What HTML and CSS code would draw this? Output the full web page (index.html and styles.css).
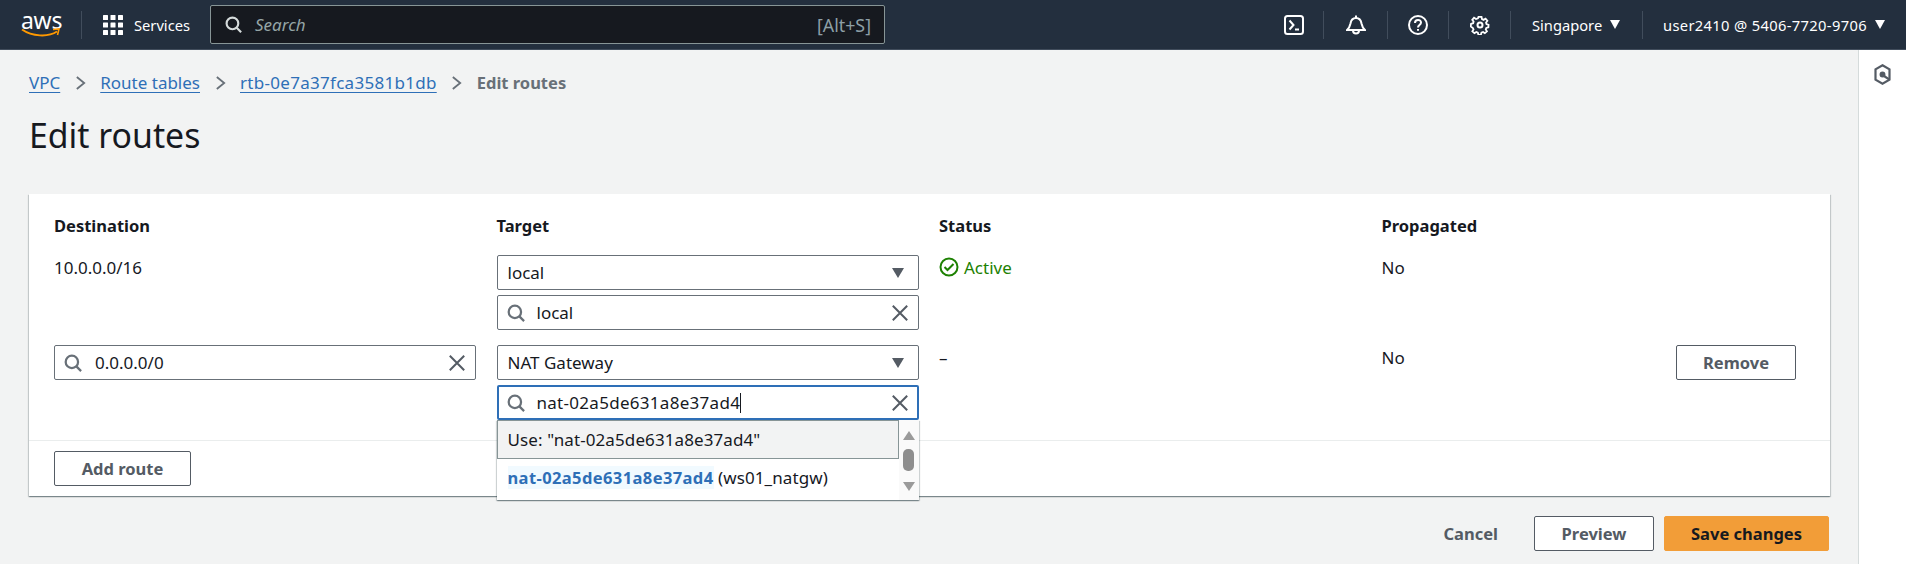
FILE: index.html
```html
<!DOCTYPE html>
<html lang="en">
<head>
    <meta charset="UTF-8">
    <meta name="viewport" content="width=device-width, initial-scale=1.0">
    <title>Edit routes</title>
    <link rel="stylesheet" href="styles.css">
</head>
<body>
    <svg class="icon-defs" width="0" height="0">
        <symbol id="i-search" viewBox="0 0 16 16"><circle cx="7" cy="7" r="5.5" fill="none" stroke="currentColor" stroke-width="2"/><path d="M11 11l4.2 4.2" fill="none" stroke="currentColor" stroke-width="2"/></symbol>
        <symbol id="i-close" viewBox="0 0 16 16"><path d="M.8.8l14.400 14.400M15.200.8L.8 15.200" fill="none" stroke="currentColor" stroke-width="2"/></symbol>
    </svg>

    <header class="topnav">
        <div class="logo">
            <span class="logo-text">aws</span>
            <svg class="logo-smile" viewBox="0 0 40 10"><path d="M1 1.5c10 7 26 8 35 2" fill="none" stroke="#f90" stroke-width="2"/><path d="M32 1.5l6-.5-1.5 6" fill="none" stroke="#f90" stroke-width="1.6"/></svg>
        </div>
        <div class="services">
            <svg class="services-icon" viewBox="0 0 20 20" fill="#fff">
                <rect width="5" height="5" rx=".5"/><rect x="7.5" width="5" height="5" rx=".5"/><rect x="15" width="5" height="5" rx=".5"/>
                <rect y="7.5" width="5" height="5" rx=".5"/><rect x="7.5" y="7.5" width="5" height="5" rx=".5"/><rect x="15" y="7.5" width="5" height="5" rx=".5"/>
                <rect y="15" width="5" height="5" rx=".5"/><rect x="7.5" y="15" width="5" height="5" rx=".5"/><rect x="15" y="15" width="5" height="5" rx=".5"/>
            </svg>
            <span>Services</span>
        </div>
        <div class="nav-search">
            <svg class="nav-search-icon"><use href="#i-search"/></svg>
            <span class="nav-search-hint">Search</span>
            <span class="nav-search-key">[Alt+S]</span>
        </div>
        <div class="nav-right">
            <div class="nav-item nav-icon nav-terminal">
                <svg viewBox="0 0 20 20" width="20" height="20" fill="none" stroke="#fff" stroke-width="2"><rect x="1" y="1" width="18" height="18" rx="2.5"/><path d="M5.5 5.5l4 4.5-4 4.5M11 14.5h4"/></svg>
            </div>
            <div class="nav-item nav-icon nav-bell">
                <svg viewBox="0 0 20 20" width="20" height="20" fill="none" stroke="#fff" stroke-width="2"><path d="M10 .5v2.500M1 15h18c-2.500-2-3-4-3.500-6.500C15 5.500 13 3 10 3S5 5.500 4.500 8.500C4 11 3.500 13 1 15z"/><path d="M7 15.500a3 3 0 0 0 6 0"/></svg>
            </div>
            <div class="nav-item nav-icon nav-help">
                <svg viewBox="0 0 20 20" width="20" height="20" fill="none" stroke="#fff" stroke-width="2"><circle cx="10" cy="10" r="9"/><path d="M7 8c0-4 6-4 6-.5 0 2.500-3 2.500-3 5"/><path d="M10 14v1.800"/></svg>
            </div>
            <div class="nav-item nav-icon">
                <svg viewBox="0 0 20 20" width="20" height="20" fill="none" stroke="#fff" stroke-width="2"><circle cx="10" cy="10" r="2.500"/><path d="M8.300 1h3.400l.5 2.500 1.800.8 2.200-1.400 2 2.400-1.500 2.100.5 1.600 2.300.8v0l-.2 2.800-2.300.7-.6 1.700 1.300 2.100-2.300 2-2-1.400-1.800.7-.6 2.500H8.200l-.6-2.500-1.700-.7-2.100 1.400-2.300-2 1.300-2.100-.7-1.700L-.2 11.600 0 8.800l2.400-.8.500-1.600L1.400 4.300l2-2.400 2.200 1.400 2.100-.8z" transform="translate(1 1) scale(.9)"/></svg>
            </div>
            <div class="nav-item nav-menu nav-region">Singapore <span class="nav-caret"></span></div>
            <div class="nav-item nav-menu nav-user">user2410 @ 5406-7720-9706 <span class="nav-caret"></span></div>
        </div>
    </header>

    <div class="layout">
        <main class="content">
            <nav class="breadcrumbs">
                <a href="#">VPC</a>
                <svg class="crumb-sep" viewBox="0 0 12 16"><path d="M2 1.500l8 6.500-8 6.500" fill="none" stroke="currentColor" stroke-width="2"/></svg>
                <a href="#">Route tables</a>
                <svg class="crumb-sep" viewBox="0 0 12 16"><path d="M2 1.500l8 6.500-8 6.500" fill="none" stroke="currentColor" stroke-width="2"/></svg>
                <a href="#" class="resource-id">rtb-0e7a37fca3581b1db</a>
                <svg class="crumb-sep" viewBox="0 0 12 16"><path d="M2 1.500l8 6.500-8 6.500" fill="none" stroke="currentColor" stroke-width="2"/></svg>
                <span class="crumb-current">Edit routes</span>
            </nav>

            <h1 class="page-title">Edit routes</h1>

            <section class="card">
                <div class="routes">
                    <div class="col-head">Destination</div>
                    <div class="col-head">Target</div>
                    <div class="col-head">Status</div>
                    <div class="col-head">Propagated</div>

                    <div class="cell-text">10.0.0.0/16</div>
                    <div class="target">
                        <div class="field select">local<span class="select-caret"></span></div>
                        <div class="field search">
                            <svg class="field-search"><use href="#i-search"/></svg>
                            <span class="field-value">local</span>
                            <svg class="field-clear"><use href="#i-close"/></svg>
                        </div>
                    </div>
                    <div class="cell-text status-ok">
                        <svg viewBox="0 0 20 20" width="20" height="20" fill="none" stroke="#1d8102" stroke-width="2"><circle cx="10" cy="10" r="8.500"/><path d="M5.500 10l3 3 6-6"/></svg>
                        Active
                    </div>
                    <div class="cell-text">No</div>

                    <div class="field search">
                        <svg class="field-search"><use href="#i-search"/></svg>
                        <span class="field-value dest-value">0.0.0.0/0</span>
                        <svg class="field-clear"><use href="#i-close"/></svg>
                    </div>
                    <div class="target">
                        <div class="field select">NAT Gateway<span class="select-caret"></span></div>
                        <div class="search-wrap">
                            <div class="field search focused">
                                <svg class="field-search"><use href="#i-search"/></svg>
                                <span class="field-value resource-id">nat-02a5de631a8e37ad4<span class="text-cursor"></span></span>
                                <svg class="field-clear"><use href="#i-close"/></svg>
                            </div>
                            <div class="dropdown">
                                <div class="dropdown-list">
                                    <div class="option option-use">Use: "nat-02a5de631a8e37ad4"</div>
                                    <div class="option"><mark class="match">nat-02a5de631a8e37ad4</mark> (ws01_natgw)</div>
                                </div>
                                <div class="scrollbar">
                                    <span class="arrow-up"></span>
                                    <span class="thumb"></span>
                                    <span class="arrow-down"></span>
                                </div>
                            </div>
                        </div>
                    </div>
                    <div class="cell-text">–</div>
                    <div class="cell-text cell-last">
                        <span>No</span>
                        <button class="btn btn-remove">Remove</button>
                    </div>
                </div>
                <div class="card-footer">
                    <button class="btn btn-add">Add route</button>
                </div>
            </section>

            <div class="actions">
                <button class="btn-link">Cancel</button>
                <button class="btn btn-preview">Preview</button>
                <button class="btn btn-save">Save changes</button>
            </div>
        </main>

        <aside class="side">
            <svg viewBox="0 0 17 21" width="17" height="21" fill="none" stroke="#545b64" stroke-width="2.200"><path d="M8.500 1.300l7 4v10.400l-7 4-7-4V5.300z"/><circle cx="8.500" cy="10.500" r="2.200" fill="#545b64" stroke-width="1.500"/><path d="M10 12l5.500 3.700"/></svg>
        </aside>
    </div>
</body>
</html>
```

FILE: styles.css
```css
* {
    box-sizing: border-box;
}
html, body {
    height: 100%;
}
body {
    margin: 0;
    overflow: hidden;
    display: flex;
    flex-direction: column;
    font-family: "Noto Sans", sans-serif;
    font-size: 17px;
    line-height: 22px;
    color: #16191f;
    background-color: #f2f3f3;
}
button {
    font-family: inherit;
    font-size: 16.500px;
    cursor: pointer;
}
.icon-defs {
    position: absolute;
}

/* top bar */
.topnav {
    display: flex;
    align-items: center;
    height: 50px;
    flex-shrink: 0;
    font-size: 14.700px;
    background-color: #232f3e;
    border-bottom: 1px solid #414d5c;
    color: #fff;
}
.logo {
    width: 82px;
    height: 28px;
    padding-left: 21px;
    border-right: 1px solid #414d5c;
    display: flex;
    flex-direction: column;
}
.logo-text {
    font-size: 23px;
    line-height: 18px;
    letter-spacing: -.3px;
}
.logo-smile {
    width: 40px;
    height: 10px;
    margin-top: -1px;
}
.services {
    display: flex;
    align-items: center;
    gap: 11px;
    width: 128px;
    padding-left: 21px;
}
.services-icon {
    width: 20px;
    height: 20px;
}
.nav-search {
    display: flex;
    align-items: center;
    width: 675px;
    height: 39px;
    padding: 0 13px 0 14px;
    background-color: #16191f;
    border: 1px solid #879596;
    border-radius: 2px;
}
.nav-search-icon {
    width: 17px;
    height: 17px;
    color: #d5dbdb;
}
.nav-search-hint {
    margin-left: 13px;
    font-style: italic;
    font-size: 17px;
    color: #95a5a6;
}
.nav-search-key {
    margin-left: auto;
    font-size: 17.800px;
    color: #8d9fa6;
}
.nav-right {
    display: flex;
    align-items: center;
    margin-left: auto;
    height: 100%;
}
.nav-item {
    display: flex;
    align-items: center;
    height: 28px;
    border-left: 1px solid #414d5c;
}
.nav-icon {
    justify-content: center;
    width: 62px;
}
.nav-terminal {
    width: 59px;
    border-left: none;
}
.nav-bell {
    width: 64px;
}
.nav-help {
    width: 61px;
}
.nav-menu {
    padding-left: 21px;
    white-space: pre;
}
.nav-region {
    width: 132px;
}
.nav-user {
    width: 264px;
    padding-left: 20px;
    letter-spacing: .35px;
}
.nav-caret {
    display: inline-block;
    width: 0;
    height: 0;
    margin-left: 4px;
    border-left: 5px solid transparent;
    border-right: 5px solid transparent;
    border-top: 9px solid #fff;
}

/* page */
.layout {
    flex: 1;
    display: flex;
    min-height: 0;
}
.content {
    flex: 1;
    padding: 22px 28px 0 29px;
}
.side {
    width: 48px;
    background-color: #fff;
    border-left: 1px solid #d5dbdb;
    display: flex;
    justify-content: center;
    align-items: flex-start;
    padding-top: 14px;
}
.breadcrumbs {
    display: flex;
    align-items: center;
    height: 22px;
    gap: 14.500px;
}
.breadcrumbs a {
    color: #2e6fb7;
    text-decoration: underline;
    text-decoration-thickness: 1px;
    text-underline-offset: 3px;
}
.crumb-sep {
    width: 11px;
    height: 16px;
    color: #687078;
}
.crumb-current {
    font-size: 16.500px;
    font-weight: 700;
    color: #687078;
}
.resource-id {
    letter-spacing: .29px;
}
.page-title {
    margin: 19px 0 0;
    height: 81px;
    font-size: 33.800px;
    line-height: 44px;
    font-weight: 400;
}

/* routes card */
.card {
    background-color: #fff;
    box-shadow: 0 1px 1px 0 rgba(0, 28, 36, .3), 1px 1px 1px 0 rgba(0, 28, 36, .15), -1px 1px 1px 0 rgba(0, 28, 36, .15);
}
.routes {
    display: grid;
    grid-template-columns: repeat(4, 1fr);
    grid-template-rows: 25px 75px 75px;
    row-gap: 15px;
    padding: 21px 6px 20px 25px;
    border-bottom: 1px solid #eaeded;
    height: 247px;
}
.col-head {
    font-size: 16.500px;
    font-weight: 700;
}
.routes > .field {
    height: 35px;
    margin-right: 20.500px;
}
.target {
    display: flex;
    flex-direction: column;
    gap: 5px;
    padding-right: 20.500px;
}
.cell-text {
    padding-top: 2px;
}
.status-ok {
    display: flex;
    gap: 5px;
    align-items: flex-start;
    color: #1d8102;
}
.cell-last {
    display: flex;
    justify-content: space-between;
    align-items: flex-start;
}
.btn-remove {
    margin-top: -2px;
    margin-right: 28px;
}
.field {
    display: flex;
    align-items: center;
    height: 35px;
    padding: 0 10px 0 9px;
    background-color: #fff;
    border: 1px solid #687078;
    border-radius: 2px;
}
.select {
    padding-left: 10px;
}
.select-caret {
    margin-left: auto;
    margin-right: 4px;
    width: 0;
    height: 0;
    border-left: 6px solid transparent;
    border-right: 6px solid transparent;
    border-top: 10px solid #545b64;
}
.field-search {
    width: 18px;
    height: 18px;
    color: #687078;
}
.field-value {
    margin-left: 12px;
    display: flex;
    align-items: center;
}
.dest-value {
    margin-left: 13px;
}
.field-clear {
    margin-left: auto;
    width: 16px;
    height: 16px;
    color: #545b64;
}
.focused {
    border: 2px solid #2e6fb7;
    padding: 0 9px 0 8px;
}
.text-cursor {
    display: inline-block;
    width: 1px;
    height: 20px;
    background-color: #16191f;
}
.search-wrap {
    position: relative;
}

/* dropdown over the card */
.dropdown {
    position: absolute;
    top: 100%;
    left: 0;
    right: 0;
    height: 80px;
    display: flex;
    background-color: #fff;
    box-shadow: 0 1px 1px 0 rgba(0, 28, 36, .3), 1px 1px 1px 0 rgba(0, 28, 36, .15), -1px 1px 1px 0 rgba(0, 28, 36, .15);
    z-index: 2;
}
.dropdown-list {
    flex: 1;
}
.option {
    padding: 0 11px;
    height: 38px;
    line-height: 38px;
    letter-spacing: .1px;
}
.option-use {
    height: 39px;
    line-height: 37px;
    background-color: #f2f3f3;
    border: 1px solid #879596;
    padding-left: 10px;
}
.match {
    background-color: #f1faff;
    color: #2e6fb7;
    font-size: 16.500px;
    font-weight: 700;
    letter-spacing: .4px;
}
.scrollbar {
    width: 20px;
    background-color: #fafafa;
    display: flex;
    flex-direction: column;
    align-items: center;
    padding-top: 11px;
}
.arrow-up {
    width: 0;
    height: 0;
    border-left: 6px solid transparent;
    border-right: 6px solid transparent;
    border-bottom: 9px solid #9a9a9a;
}
.thumb {
    width: 11px;
    height: 22px;
    margin-top: 9px;
    border-radius: 5px;
    background-color: #8e8e8e;
}
.arrow-down {
    width: 0;
    height: 0;
    margin-top: 11px;
    border-left: 6px solid transparent;
    border-right: 6px solid transparent;
    border-top: 9px solid #9a9a9a;
}
.card-footer {
    padding: 10px 25px;
    height: 55px;
}

/* buttons */
.btn {
    height: 35px;
    padding: 0;
    font-weight: 700;
    color: #545b64;
    background-color: #fff;
    border: 1px solid #545b64;
    border-radius: 2px;
}
.btn-add {
    width: 137px;
}
.btn-remove, .btn-preview {
    width: 120px;
}
.actions {
    display: flex;
    justify-content: flex-end;
    align-items: center;
    margin-top: 20px;
    margin-right: 1px;
}
.btn-link {
    padding: 0;
    margin-right: 36px;
    background: none;
    border: none;
    font-weight: 700;
    color: #545b64;
}
.btn-save {
    width: 165px;
    margin-left: 10px;
    color: #16191f;
    background-color: #f29d38;
    border-color: #f29d38;
}
```
